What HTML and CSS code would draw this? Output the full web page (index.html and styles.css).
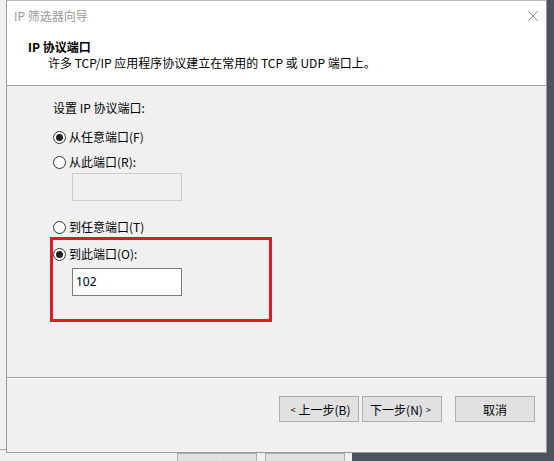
FILE: index.html
```html
<!DOCTYPE html>
<html lang="zh-CN">
<head>
    <meta charset="UTF-8">
    <title>IP 筛选器向导</title>
    <link rel="stylesheet" href="styles.css">
</head>
<body>

    <div class="desktop">
        <!-- janela de trás (parcialmente visível) -->
        <div class="backwin">
            <div class="backwin-footer">
                <span class="btn btn-back">确定</span>
                <span class="btn btn-back">取消</span>
            </div>
        </div>

        <div class="wizard">
            <div class="titlebar">
                <span class="title">IP 筛选器向导</span>
                <svg class="close" width="10" height="10" viewBox="0 0 10 10">
                    <path d="M0.5 0.5 L9.5 9.5 M9.5 0.5 L0.5 9.5" stroke="#8a8a8a" stroke-width="1" fill="none"/>
                </svg>
            </div>
            <div class="header">
                <div class="header-title">IP 协议端口</div>
                <div class="header-sub">许多 TCP/IP 应用程序协议建立在常用的 TCP 或 UDP 端口上。</div>
            </div>

            <div class="content">
                <div class="group-label">设置 IP 协议端口:</div>

                <div class="radio-row r1"><span class="radio checked"></span>从任意端口(F)</div>
                <div class="radio-row r2"><span class="radio"></span>从此端口(R):</div>
                <div class="port-box disabled"></div>

                <div class="radio-row r3"><span class="radio"></span>到任意端口(T)</div>
                <div class="radio-row r4"><span class="radio checked"></span>到此端口(O):</div>
                <div class="port-box">102</div>

                <div class="highlight"></div>
            </div>

            <div class="footer">
                <button class="btn"><span class="arrow">&lt;</span> 上一步(B)</button>
                <button class="btn next">下一步(N) <span class="arrow">&gt;</span></button>
                <button class="btn cancel">取消</button>
            </div>
        </div>
    </div>

</body>
</html>
```

FILE: styles.css
```css
body {
    margin: 0;
    font-family: "Noto Sans CJK SC", "Noto Sans", sans-serif;
    font-size: 12px;
    color: #000;
}
.desktop {
    position: relative;
    width: 554px;
    height: 461px;
    overflow: hidden;
    background-color: #4d535e;
}
.backwin {
    position: absolute;
    left: 0;
    top: 0;
    width: 352px;
    height: 500px;
    background-color: #f0f0f0;
    padding-top: 449px;
    box-sizing: border-box;
}
.backwin-footer {
    border-top: 1px solid #a0a0a0;
    display: flex;
    gap: 8px;
    padding: 3px 0 0 177px;
}
.btn-back {
    width: 80px;
}
.wizard {
    position: absolute;
    left: 6px;
    top: 0;
    width: 541px;
    height: 453px;
    box-sizing: border-box;
    border: 1px solid #9a9a9a;
    border-top-color: #b8b8b8;
    background-color: #f0f0f0;
    display: flex;
    flex-direction: column;
}
.titlebar {
    background-color: #fff;
    height: 29px;
    display: flex;
    align-items: center;
    justify-content: space-between;
    padding: 0 8px 0 7px;
}
.title {
    color: #999;
}
.header {
    background-color: #fff;
    height: 55px;
    border-bottom: 1px solid #a0a0a0;
    padding-left: 21px;
}
.header-title {
    font-weight: bold;
    line-height: 16px;
    margin-top: 9px;
}
.header-sub {
    line-height: 16px;
    margin-left: 20px;
}
.content {
    position: relative;
    flex: 1;
    padding: 14px 0 0 46px;
    border-bottom: 1px solid #a0a0a0;
    box-shadow: 0 1px 0 #fff;
}
.group-label {
    line-height: 16px;
}
.radio-row {
    display: flex;
    align-items: center;
    line-height: 16px;
}
.r1 { margin-top: 13px; }
.r2 { margin-top: 9px; }
.r3 { margin-top: 18px; }
.r4 { margin-top: 11px; }
.radio {
    width: 13px;
    height: 13px;
    box-sizing: border-box;
    border: 1px solid #333;
    border-radius: 50%;
    background-color: #fff;
    margin-right: 3px;
    display: flex;
    align-items: center;
    justify-content: center;
}
.radio.checked::after {
    content: "";
    width: 7px;
    height: 7px;
    border-radius: 50%;
    background-color: #222;
}
.port-box {
    width: 110px;
    height: 28px;
    box-sizing: border-box;
    margin: 3px 0 0 19px;
    border: 1px solid #7a7a7a;
    background-color: #fff;
    padding-left: 3px;
    line-height: 26px;
    font-family: "Noto Sans", sans-serif;
}
.port-box.disabled {
    border-color: #cccccc;
    background-color: #f0f0f0;
}
.r4 + .port-box {
    margin-top: 6px;
}
.highlight {
    position: absolute;
    left: 43px;
    top: 151px;
    width: 222px;
    height: 85px;
    box-sizing: border-box;
    border: 3px solid #e8161e;
}
.footer {
    height: 56px;
    display: flex;
    align-items: flex-start;
    padding: 18px 11px 0 0;
    justify-content: flex-end;
}
.btn {
    height: 26px;
    width: 80px;
    box-sizing: border-box;
    border: 1px solid #adadad;
    background-color: #e1e1e1;
    font-family: "Noto Sans CJK SC", "Noto Sans", sans-serif;
    font-size: 12px;
    color: #000;
    padding: 0;
    display: flex;
    align-items: center;
    justify-content: center;
}
.btn.next {
    margin-left: 3px;
}
.btn.cancel {
    margin-left: 13px;
}
.arrow {
    font-size: 9px;
    margin: 0 3px;
}
```
